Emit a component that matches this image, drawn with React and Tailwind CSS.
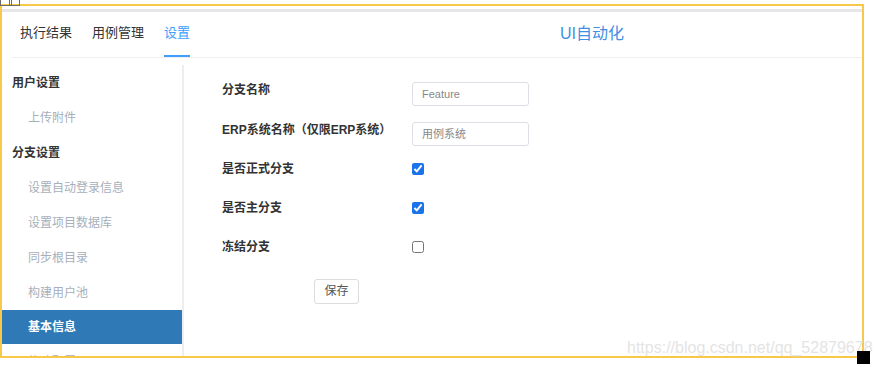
const SIDE = [
  { label: '用户设置', head: true },
  { label: '上传附件' },
  { label: '分支设置', head: true },
  { label: '设置自动登录信息' },
  { label: '设置项目数据库' },
  { label: '同步根目录' },
  { label: '构建用户池' },
  { label: '基本信息', active: true },
  { label: '修改配置' },
]

const TABS = ['执行结果', '用例管理', '设置']

function SideItem({ label, head, active }) {
  if (active) {
    return (
      <div className="h-[34px] flex items-center pl-[26px] bg-[#2f79b6] text-white font-bold text-[12px]">
        {label}
      </div>
    )
  }
  return (
    <div
      className={
        head
          ? 'h-[35px] flex items-center pl-[10px] font-bold text-[12px] text-[#333]'
          : 'h-[35px] flex items-center pl-[26px] text-[12px] text-[#a7afbb]'
      }
    >
      {label}
    </div>
  )
}

function Row({ label, children, first }) {
  return (
    <div className={`flex items-start ${first ? 'h-[40px]' : 'h-[39px]'}`}>
      <div className="w-[190px] leading-[16px] font-bold text-[12px] text-[#333]">{label}</div>
      {children}
    </div>
  )
}

function Check({ checked }) {
  return (
    <div className="h-[16px] flex items-center">
      <input
        type="checkbox"
        defaultChecked={checked}
        className="w-[12px] h-[12px] m-0 accent-[#1a73e8]"
      />
    </div>
  )
}

export default function App() {
  return (
    <div className="relative w-[880px] h-[367px] bg-white overflow-hidden font-['Liberation_Sans','Noto_Sans_CJK_SC',sans-serif]">
      {/* tiny corner glyph */}
      <div className="absolute left-0 top-0 w-[20px] h-[6px] border border-t-0 border-[#6b6b6b] flex justify-center">
        <div className="w-[3px] h-full border-x border-[#6b6b6b]" />
      </div>

      {/* framed app */}
      <div className="mt-[4px] w-[864px] h-[354px] border-2 border-[#f8c84a] overflow-hidden flex flex-col">
        <div className="shrink-0 mt-[3px] h-[3px] bg-[#e6e6e8]" />

        {/* header */}
        <div className="shrink-0 ml-[10px] h-[46px] border-b border-[#efefef] flex items-stretch">
          <div className="flex gap-[20px] pl-[8px]">
            {TABS.map((t, i) => (
              <div
                key={t}
                className={`flex items-center pb-[1px] border-b-2 text-[13px] ${
                  i === 2 ? 'border-[#409eff] text-[#409eff]' : 'border-transparent text-[#333]'
                }`}
              >
                {t}
              </div>
            ))}
          </div>
          <div className="ml-[370px] flex items-center pb-[2px] text-[16px] text-[#3f8fe3]">UI自动化</div>
        </div>

        {/* body */}
        <div className="flex shrink-0">
          <div className="mt-[7px] w-[182px] border-r-2 border-[#eeeeee]">
            {SIDE.map(s => (
              <SideItem key={s.label} {...s} />
            ))}
          </div>

          <div className="pl-[38px] pt-[24px]">
            <Row label="分支名称" first>
              <div className="w-[117px] h-[24px] border border-[#dcdfe6] rounded-[3px] pl-[9px] flex items-center text-[11px] text-[#888]">
                Feature
              </div>
            </Row>
            <Row label="ERP系统名称（仅限ERP系统）">
              <div className="w-[117px] h-[24px] border border-[#dcdfe6] rounded-[3px] pl-[9px] flex items-center text-[11px] text-[#888]">
                用例系统
              </div>
            </Row>
            <Row label="是否正式分支">
              <Check checked />
            </Row>
            <Row label="是否主分支">
              <Check checked />
            </Row>
            <Row label="冻结分支">
              <Check />
            </Row>
            <button className="ml-[92px] w-[45px] h-[25px] border border-[#dcdcdc] rounded-[3px] bg-white text-[12px] text-[#555]">
              保存
            </button>
          </div>
        </div>
      </div>

      {/* watermark */}
      <div className="absolute left-[627px] top-[338px] text-[16px] leading-[20px] text-[#e4e4e4] whitespace-nowrap">
        https://blog.csdn.net/qq_52879678
      </div>
      <div className="absolute left-[857px] top-[351px] w-[13px] h-[13px] bg-black" />
    </div>
  )
}
